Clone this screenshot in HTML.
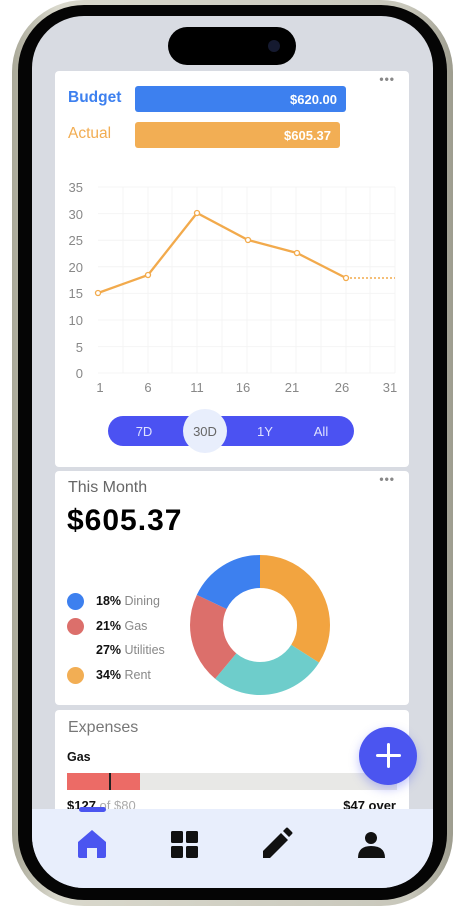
<!DOCTYPE html>
<html><head><meta charset="utf-8"><style>
*{margin:0;padding:0;box-sizing:border-box}
body{width:465px;height:913px;background:#fff;position:relative;overflow:hidden;font-family:"Liberation Sans",sans-serif}
.frame{position:absolute;left:12px;top:0;width:441px;height:906px;border-radius:72px;background:linear-gradient(90deg,#a9a898,#d9d8cc 10%,#c8c7bb 90%,#9e9d8f);}
.bezel{position:absolute;left:18px;top:5px;width:429px;height:895px;border-radius:66px;background:#050505}
.screen{position:absolute;left:32px;top:16px;width:401px;height:872px;border-radius:52px;background:#d8dbe2;overflow:hidden}
.island{position:absolute;left:168px;top:27px;width:128px;height:38px;border-radius:19px;background:#000}
.cam{position:absolute;left:268px;top:40px;width:12px;height:12px;border-radius:6px;background:#151a30}
.card{position:absolute;left:55px;width:354px;background:#fff;border-radius:4px}
.dots{position:absolute;right:14px;top:8px;color:#888;font-size:12px;letter-spacing:1px;font-weight:bold}
.nav{position:absolute;left:32px;top:809px;width:401px;height:79px;background:#e8eefc;border-radius:0 0 52px 52px}
</style></head><body>
<div class="frame"></div><div class="bezel"></div>
<div class="screen"></div>
<div class="island"></div><div class="cam"></div>

<div class="card" style="top:71px;height:396px">
  <div class="dots" style="top:1px">•••</div>
  <div style="position:absolute;left:13px;top:18px;color:#3d80ef;font-size:15.5px;font-weight:bold">Budget</div>
  <div style="position:absolute;left:80px;top:15px;width:211px;height:26px;background:#3d80ef;border-radius:3px;color:#fff;font-size:13px;font-weight:bold;text-align:right;padding:6px 9px 0 0">$620.00</div>
  <div style="position:absolute;left:13px;top:54px;color:#f2ad52;font-size:15.5px">Actual</div>
  <div style="position:absolute;left:80px;top:51px;width:205px;height:26px;background:#f2ae54;border-radius:3px;color:#fff;font-size:13px;font-weight:bold;text-align:right;padding:6px 9px 0 0">$605.37</div>
</div>

<svg style="position:absolute;left:0;top:0" width="465" height="913">
  <g stroke="#f4f4f4" stroke-width="1">
    <line x1="98" y1="187" x2="395" y2="187"/><line x1="98" y1="213.6" x2="395" y2="213.6"/><line x1="98" y1="240.2" x2="395" y2="240.2"/><line x1="98" y1="266.8" x2="395" y2="266.8"/><line x1="98" y1="293.4" x2="395" y2="293.4"/><line x1="98" y1="320" x2="395" y2="320"/><line x1="98" y1="346.6" x2="395" y2="346.6"/><line x1="98" y1="373" x2="395" y2="373"/>
    <line x1="123" y1="187" x2="123" y2="373"/><line x1="148" y1="187" x2="148" y2="373"/><line x1="172" y1="187" x2="172" y2="373"/><line x1="197" y1="187" x2="197" y2="373"/><line x1="222" y1="187" x2="222" y2="373"/><line x1="247" y1="187" x2="247" y2="373"/><line x1="271" y1="187" x2="271" y2="373"/><line x1="296" y1="187" x2="296" y2="373"/><line x1="321" y1="187" x2="321" y2="373"/><line x1="346" y1="187" x2="346" y2="373"/><line x1="370" y1="187" x2="370" y2="373"/><line x1="395" y1="187" x2="395" y2="373"/>
  </g>
  <g fill="#888" font-size="13" font-family="Liberation Sans">
    <text x="83" y="192" text-anchor="end">35</text><text x="83" y="219" text-anchor="end">30</text><text x="83" y="245" text-anchor="end">25</text><text x="83" y="272" text-anchor="end">20</text><text x="83" y="298" text-anchor="end">15</text><text x="83" y="325" text-anchor="end">10</text><text x="83" y="352" text-anchor="end">5</text><text x="83" y="378" text-anchor="end">0</text>
    <text x="100" y="392" text-anchor="middle">1</text><text x="148" y="392" text-anchor="middle">6</text><text x="197" y="392" text-anchor="middle">11</text><text x="243" y="392" text-anchor="middle">16</text><text x="292" y="392" text-anchor="middle">21</text><text x="342" y="392" text-anchor="middle">26</text><text x="390" y="392" text-anchor="middle">31</text>
  </g>
  <polyline points="98,293 148,275 197,213 248,240 297,253 346,278" fill="none" stroke="#f2aa4c" stroke-width="2.3"/>
  <line x1="346" y1="278" x2="395" y2="278" stroke="#f2aa4c" stroke-width="1.5" stroke-dasharray="2,2"/>
  <g fill="#fff" stroke="#f2aa4c" stroke-width="1.3">
    <circle cx="98" cy="293" r="2.5"/><circle cx="148" cy="275" r="2.5"/><circle cx="197" cy="213" r="2.5"/><circle cx="248" cy="240" r="2.5"/><circle cx="297" cy="253" r="2.5"/><circle cx="346" cy="278" r="2.5"/>
  </g>
  <rect x="108" y="416" width="246" height="30" rx="15" fill="#4b52f2"/>
  <circle cx="205" cy="431" r="22" fill="#e8eefc"/>
  <g font-size="13" font-family="Liberation Sans" text-anchor="middle">
    <text x="144" y="436" fill="#dfe2ff">7D</text><text x="205" y="436" fill="#666">30D</text><text x="265" y="436" fill="#dfe2ff">1Y</text><text x="321" y="436" fill="#dfe2ff">All</text>
  </g>
</svg>

<div class="card" style="top:471px;height:234px">
  <div class="dots" style="top:1px">•••</div>
  <div style="position:absolute;left:13px;top:8px;color:#666;font-size:16px">This Month</div>
  <div style="position:absolute;left:12px;top:33px;color:#000;font-size:30px;font-weight:bold;letter-spacing:1px">$605.37</div>
  <div style="position:absolute;left:12px;top:122px;width:17px;height:17px;border-radius:9px;background:#3d80ef"></div>
  <div style="position:absolute;left:12px;top:147px;width:17px;height:17px;border-radius:9px;background:#dc6f6b"></div>
  <div style="position:absolute;left:12px;top:196px;width:17px;height:17px;border-radius:9px;background:#f2ae54"></div>
  <div style="position:absolute;left:41px;top:118px;font-size:12.5px;line-height:24.5px;color:#888">
    <b style="color:#111">18%</b> Dining<br><b style="color:#111">21%</b> Gas<br><b style="color:#111">27%</b> Utilities<br><b style="color:#111">34%</b> Rent
  </div>
</div>
<svg style="position:absolute;left:190px;top:555px" width="140" height="140" viewBox="0 0 140 140">
  <g transform="rotate(-90 70 70)" fill="none" stroke-width="33">
    <circle cx="70" cy="70" r="53.5" stroke="#f2a440" stroke-dasharray="114.3 300"/>
    <circle cx="70" cy="70" r="53.5" stroke="#6ecdcb" stroke-dasharray="0 114.3 90.8 300"/>
    <circle cx="70" cy="70" r="53.5" stroke="#dc6f6b" stroke-dasharray="0 205.1 70.6 300"/>
    <circle cx="70" cy="70" r="53.5" stroke="#3d80ef" stroke-dasharray="0 275.7 60.6 300"/>
  </g>
</svg>

<div class="card" style="top:710px;height:120px">
  <div style="position:absolute;left:13px;top:9px;color:#777;font-size:16px">Expenses</div>
  <div style="position:absolute;left:12px;top:40px;color:#111;font-size:12.5px;font-weight:bold">Gas</div>
  <div style="position:absolute;left:12px;top:63px;width:330px;height:17px;background:#e8e8e6"></div>
  <div style="position:absolute;left:12px;top:63px;width:73px;height:17px;background:#ec6b66"></div>
  <div style="position:absolute;left:54px;top:63px;width:1.5px;height:17px;background:#222"></div>
  <div style="position:absolute;left:12px;top:88px;font-size:13px;font-weight:bold;color:#111">$127 <span style="color:#aaa;font-weight:normal">of $80</span></div>
  <div style="position:absolute;right:13px;top:88px;font-size:13px;font-weight:bold;color:#111">$47 over</div>
</div>

<div class="nav"></div>
<div style="position:absolute;left:79px;top:807px;width:27px;height:5px;border-radius:3px;background:#4b55f0"></div>
<svg style="position:absolute;left:0;top:820px" width="465" height="50">
  <path d="M78 36 V22 L92 10 L106 22 V36 Q106 38 104 38 H97 V28 H87 V38 H80 Q78 38 78 36Z" fill="#4b55f0"/>
  <rect x="171" y="11" width="12" height="12" rx="1.5" fill="#111"/><rect x="186" y="11" width="12" height="12" rx="1.5" fill="#111"/><rect x="171" y="26" width="12" height="12" rx="1.5" fill="#111"/><rect x="186" y="26" width="12" height="12" rx="1.5" fill="#111"/>
  <path d="M263 38 V31 L281 13 L288 20 L270 38Z M283 11 L286 8 Q287 7 288 8 L292 12 Q293 13 292 14 L289 17Z" fill="#111"/>
  <circle cx="371" cy="18" r="6" fill="#111"/>
  <path d="M358 38 Q358 26 371 26 Q385 26 385 38Z" fill="#111"/>
</svg>
<div style="position:absolute;left:359px;top:727px;width:58px;height:58px;border-radius:29px;background:#4b55f0;box-shadow:0 4px 10px rgba(75,85,240,.35)"></div>
<div style="position:absolute;left:387px;top:743px;width:3px;height:25px;background:#fff;border-radius:2px"></div>
<div style="position:absolute;left:376px;top:754px;width:25px;height:3px;background:#fff;border-radius:2px"></div>
</body></html>
